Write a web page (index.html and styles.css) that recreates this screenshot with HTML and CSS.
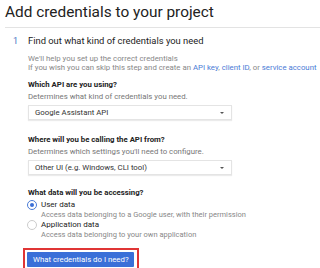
FILE: index.html
```html
<!DOCTYPE html>
<html lang="en">
<head>
  <meta charset="UTF-8" />
  <meta name="viewport" content="width=device-width, initial-scale=1.0"/>
  <title>Add credentials to your project</title>
  <link rel="stylesheet" href="styles.css">
</head>
<body>

  <h1 class="page-title">Add credentials to your project</h1>

  <div class="step">
    <div class="step-num">1</div>
    <div class="step-body">
      <h2 class="step-title">Find out what kind of credentials you need</h2>
      <p class="intro">
        We'll help you set up the correct credentials<br>
        If you wish you can skip this step and create an <a href="#">API key</a>, <a href="#">client ID</a>, or <a href="#">service account</a>
      </p>

      <div class="field">
        <div class="label">Which API are you using?</div>
        <div class="hint">Determines what kind of credentials you need.</div>
        <div class="select">
          <span>Google Assistant API</span>
          <span class="caret"></span>
        </div>
      </div>

      <div class="field">
        <div class="label">Where will you be calling the API from?</div>
        <div class="hint">Determines which settings you'll need to configure.</div>
        <div class="select">
          <span>Other UI (e.g. Windows, CLI tool)</span>
          <span class="caret"></span>
        </div>
      </div>

      <div class="field data-field">
        <div class="label">What data will you be accessing?</div>
        <label class="radio">
          <span class="dot checked"></span>
          <span class="radio-text">
            <span class="radio-name">User data</span>
            <span class="radio-desc">Access data belonging to a Google user, with their permission</span>
          </span>
        </label>
        <label class="radio">
          <span class="dot"></span>
          <span class="radio-text">
            <span class="radio-name">Application data</span>
            <span class="radio-desc">Access data belonging to your own application</span>
          </span>
        </label>
      </div>

      <div class="highlight">
        <button class="primary-btn">What credentials do I need?</button>
      </div>
    </div>
  </div>

</body>
</html>
```

FILE: styles.css
```css
body {
  font-family: Roboto, 'Liberation Sans', sans-serif;
  color: #212121;
  margin: 0;
  padding: 0;
  background: #fff;
  overflow: hidden;
}

.page-title {
  margin: 0 0 0 5px;
  padding: 3px 0 6px;
  font-size: 15.4px;
  font-weight: 400;
  color: #222;
  border-bottom: 1px solid #e3e3e3;
}

.step {
  display: flex;
  padding-top: 7px;
}

.step-num {
  width: 28px;
  padding-left: 13px;
  box-sizing: border-box;
  font-size: 9px;
  line-height: 12px;
  color: #4a76c2;
}

.step-body {
  flex: 1;
  white-space: nowrap;
}

.step-title {
  margin: 0;
  font-size: 9.4px;
  font-weight: 400;
  line-height: 12px;
  color: #222;
}

.intro {
  margin: 7px 0 0;
  font-size: 7.8px;
  line-height: 9px;
  color: #888;
}

.intro a {
  color: #4a7bd6;
  text-decoration: none;
}

.field {
  margin-top: 8px;
}

.field + .field {
  margin-top: 15px;
}

.field + .data-field {
  margin-top: 13px;
}

.label {
  font-size: 7.8px;
  font-weight: 700;
  line-height: 10px;
  color: #222;
}

.hint {
  margin-top: 2px;
  font-size: 7.8px;
  line-height: 10px;
  color: #777;
}

.select {
  display: flex;
  align-items: center;
  justify-content: space-between;
  width: 204px;
  height: 15px;
  margin-top: 3px;
  padding: 0 6px;
  box-sizing: border-box;
  border: 1px solid #e4e4e4;
  box-shadow: 0 1px 1px rgba(0,0,0,0.08);
  font-size: 7.8px;
  color: #333;
}

.caret {
  width: 0;
  height: 0;
  margin-right: 1px;
  border-left: 2.5px solid transparent;
  border-right: 2.5px solid transparent;
  border-top: 2.5px solid #555;
}

.radio {
  display: flex;
  align-items: flex-start;
}

.radio:first-of-type {
  margin-top: 2px;
}

.dot {
  width: 10px;
  height: 10px;
  margin: 0 4px 0 -1px;
  border: 1px solid #ccc;
  border-radius: 50%;
  box-sizing: border-box;
  position: relative;
  flex-shrink: 0;
}

.dot.checked {
  border-color: #4a7bd6;
}

.dot.checked::after {
  content: "";
  position: absolute;
  left: 2px;
  top: 2px;
  width: 4px;
  height: 4px;
  border-radius: 50%;
  background: #3b6fd6;
}

.radio-text {
  display: flex;
  flex-direction: column;
}

.radio-name {
  font-size: 8px;
  line-height: 10px;
  color: #222;
}

.radio-desc {
  font-size: 7.5px;
  line-height: 10px;
  color: #888;
}

.highlight {
  display: inline-block;
  margin: 8px 0 0 -5px;
  padding: 2px 3px 1px 2px;
  border: 2px solid #e03535;
}

.primary-btn {
  display: block;
  padding: 0 6px;
  width: 107px;
  height: 15px;
  border: none;
  border-radius: 1px;
  background-color: #3a6fd8;
  color: #fff;
  font-family: Roboto, 'Liberation Sans', sans-serif;
  font-size: 7.8px;
  cursor: pointer;
}
```
